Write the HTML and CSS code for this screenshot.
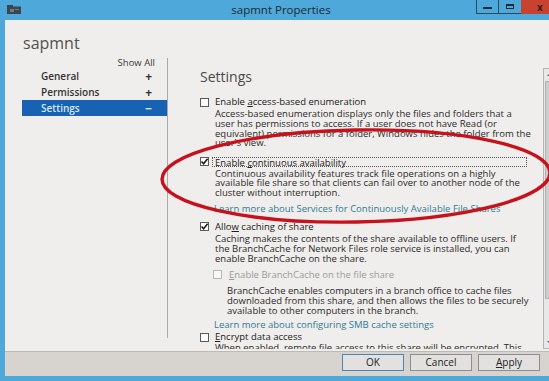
FILE: index.html
```html
<!DOCTYPE html>
<html>
<head>
<meta charset="utf-8">
<title>sapmnt Properties</title>
<link rel="stylesheet" href="styles.css">
</head>
<body>
<div class="window">
  <div class="titlebar">
    <div class="tb-left">
      <svg class="appicon" width="14" height="9" viewBox="0 0 14 9">
        <rect x="0" y="0" width="6" height="2" fill="#3a464d"/>
        <rect x="0" y="1.5" width="14" height="7.5" fill="#3a464d"/>
        <rect x="3" y="4" width="4" height="3" fill="#6d7b82"/>
        <rect x="8" y="4" width="4" height="1" fill="#6d7b82"/>
      </svg>
    </div>
    <div class="title">sapmnt Properties</div>
    <div class="controls">
      <div class="ctl ctl-min"><span class="glyph-min"></span></div>
      <div class="ctl ctl-max"><span class="glyph-max"></span></div>
      <div class="ctl ctl-close">x</div>
    </div>
  </div>
  <div class="client">
    <div class="header">sapmnt</div>
    <div class="main">
      <div class="nav">
        <div class="showall">Show All</div>
        <div class="navitem"><span>General</span><span class="sign">+</span></div>
        <div class="navitem"><span>Permissions</span><span class="sign">+</span></div>
        <div class="navitem selected"><span>Settings</span><span class="sign">&minus;</span></div>
      </div>
      <div class="divider"></div>
      <div class="pane">
        <div class="scrollbox">
          <div class="content">
            <div class="section-title">Settings</div>

            <div class="cbrow r1"><span class="cb"></span><span class="label">Enable <u>a</u>ccess-based enumeration</span></div>
            <div class="desc d1">Access-based enumeration displays only the files and folders that a<br>user has permissions to access. If a user does not have Read (or<br>equivalent) permissions for a folder, Windows hides the folder from the<br>user's view.</div>

            <div class="cbrow r2"><span class="cb checked"><svg width="9" height="9" viewBox="0 0 9 9"><path d="M1.5 4.5 L3.6 6.8 L7.6 1.8" fill="none" stroke="#1c1c1c" stroke-width="1.6"/></svg></span><span class="label focus">Enable <u>c</u>ontinuous availability</span></div>
            <div class="desc d2">Continuous availability features track file operations on a highly<br>available file share so that clients can fail over to another node of the<br>cluster without interruption.</div>
            <div class="link l1">Learn more about Services for Continuously Available File Shares</div>

            <div class="cbrow r3"><span class="cb checked"><svg width="9" height="9" viewBox="0 0 9 9"><path d="M1.5 4.5 L3.6 6.8 L7.6 1.8" fill="none" stroke="#1c1c1c" stroke-width="1.6"/></svg></span><span class="label">Allo<u>w</u> caching of share</span></div>
            <div class="desc d3">Caching makes the contents of the share available to offline users. If<br>the BranchCache for Network Files role service is installed, you can<br>enable BranchCache on the share.</div>

            <div class="cbrow r4 disabled"><span class="cb"></span><span class="label"><u>E</u>nable BranchCache on the file share</span></div>
            <div class="desc d4">BranchCache enables computers in a branch office to cache files<br>downloaded from this share, and then allows the files to be securely<br>available to other computers in the branch.</div>
            <div class="link l2">Learn more about configuring SMB cache settings</div>

            <div class="cbrow r5"><span class="cb"></span><span class="label"><u>E</u>ncrypt data access</span></div>
            <div class="desc d5">When enabled, remote file access to this share will be encrypted. This</div>
          </div>
          <div class="scrollbar">
            <div class="sb-arrow"><span class="tri-up"></span></div>
            <div class="sb-thumb"></div>
            <div class="sb-track"></div>
            <div class="sb-arrow"><span class="tri-down"></span></div>
          </div>
        </div>
      </div>
    </div>
    <div class="footer">
      <div class="btn default">OK</div>
      <div class="btn">Cancel</div>
      <div class="btn"><u>A</u>pply</div>
    </div>
  </div>
  <svg class="annotation" width="562" height="381" viewBox="0 0 562 381">
    <ellipse cx="356" cy="176" rx="194" ry="46" transform="rotate(-1 356 176)" fill="none" stroke="#c5121c" stroke-width="3.4"/>
  </svg>
</div>
</body>
</html>
```

FILE: styles.css
```css
html, body {
  margin: 0;
  padding: 0;
}
body {
  width: 549px;
  height: 381px;
  overflow: hidden;
  background: #4da7d8;
  font-family: "Open Sans", "Noto Sans", sans-serif;
}
.window {
  position: relative;
  width: 562px;
  height: 381px;
  box-sizing: border-box;
  padding: 0 5px 5px 5px;
  background: #4ea8d9;
  display: flex;
  flex-direction: column;
}
.titlebar {
  height: 20px;
  margin: 0 -5px;
  display: grid;
  grid-template-columns: 1fr auto 1fr;
  align-items: start;
}
.tb-left {
  padding: 5px 0 0 7px;
}
.appicon {
  display: block;
}
.title {
  font-size: 11.5px;
  line-height: 20px;
  color: #1d2a33;
}
.controls {
  display: flex;
  justify-content: flex-end;
}
.ctl {
  height: 14px;
  box-sizing: border-box;
  display: flex;
  align-items: center;
  justify-content: center;
}
.ctl-min {
  width: 23px;
  border-left: 1px solid #2b4a60;
  border-bottom: 1px solid #2b4a60;
  border-right: 1px solid #2b4a60;
}
.ctl-max {
  width: 22px;
  border-bottom: 1px solid #2b4a60;
}
.ctl-close {
  width: 41px;
  background: #c7432f;
  color: #3a1a14;
  font-size: 10px;
  font-weight: 700;
  line-height: 14px;
  justify-content: flex-start;
  padding-left: 16px;
}
.glyph-min {
  width: 9px;
  height: 2.5px;
  background: #1b2b36;
  margin-top: 3px;
}
.glyph-max {
  width: 8px;
  height: 5px;
  box-sizing: border-box;
  border: 1px solid #1b2b36;
  border-top-width: 2px;
}
.client {
  flex: 1;
  background: #f0eeec;
  display: flex;
  flex-direction: column;
  min-height: 0;
}
.header {
  height: 36px;
  box-sizing: border-box;
  padding: 13px 0 0 18px;
  font-size: 16px;
  line-height: 20px;
  color: #505050;
}
.main {
  flex: 1;
  display: flex;
  min-height: 0;
}
.nav {
  width: 162px;
  box-sizing: border-box;
  padding-left: 17px;
  display: flex;
  flex-direction: column;
}
.showall {
  margin-top: 1px;
  height: 11px;
  line-height: 11px;
  font-size: 9.5px;
  color: #3a3a3a;
  text-align: right;
  padding-right: 12px;
}
.navitem {
  height: 16px;
  display: flex;
  align-items: center;
  justify-content: space-between;
  padding: 0 15px 0 19px;
  font-size: 10px;
  font-weight: 600;
  color: #333;
}
.navitem .sign {
  font-size: 12px;
  font-weight: 700;
}
.navitem.selected {
  background: #1762b3;
  color: #d8e6f3;
}
.divider {
  width: 1px;
  background: #a9a9a9;
  margin: 2px 0 13px 0;
}
.pane {
  flex: 1;
  padding: 12px 0 2px 0;
  display: flex;
  flex-direction: column;
  min-width: 0;
}
.scrollbox {
  flex: 1;
  display: flex;
  min-height: 0;
}
.content {
  flex: 1;
  overflow: hidden;
  padding-left: 32px;
  color: #2a2a2a;
}
.section-title {
  font-size: 14px;
  line-height: 18px;
  color: #4a4a4a;
}
.cbrow {
  height: 12px;
  display: flex;
  align-items: center;
  font-size: 9.5px;
  color: #202020;
  white-space: nowrap;
}
.cb {
  width: 9px;
  height: 9px;
  box-sizing: border-box;
  border: 1px solid #5a5a5a;
  background: #fff;
  flex: none;
  display: flex;
  align-items: center;
  justify-content: center;
}
.cb svg {
  display: block;
  margin: -1px;
}
.label {
  margin-left: 6px;
  line-height: 12px;
}
.label.focus {
  margin-left: 3px;
  flex: 1;
  margin-right: 16px;
  height: 10px;
  line-height: 10px;
  padding-left: 2px;
  border: 1px dotted #555;
  box-sizing: border-box;
}
.desc {
  font-size: 9.5px;
  line-height: 9.8px;
  padding-left: 15px;
  white-space: nowrap;
  color: #2a2a2a;
}
.link {
  font-size: 9.5px;
  line-height: 12px;
  padding-left: 14px;
  color: #2f7b98;
  white-space: nowrap;
}
.r1 { margin-top: 10px; }
.d1 { margin-top: 1px; }
.r2 { margin-top: 7.5px; }
.d2 { margin-top: 1px; }
.l1 { margin-top: 5px; }
.r3 { margin-top: 5.6px; }
.d3 { margin-top: 1.5px; }
.r4 { margin-top: 5.4px; padding-left: 13px; }
.r4 .label { margin-left: 7px; }
.disabled { color: #9a9a9a; }
.disabled .cb { border-color: #b8b8b8; background: #f7f7f7; }
.d4 { margin-top: 5.1px; padding-left: 27px; }
.l2 { margin-top: 4px; }
.r5 { margin-top: 0; }
.d5 { margin-top: 0; }
.scrollbar {
  width: 14px;
  box-sizing: border-box;
  border: 1px solid #b4b4b4;
  background: #e8e8e8;
  display: flex;
  flex-direction: column;
}
.sb-arrow {
  height: 11px;
  display: flex;
  align-items: center;
  justify-content: center;
}
.tri-up {
  width: 0; height: 0;
  border-left: 3px solid transparent;
  border-right: 3px solid transparent;
  border-bottom: 3px solid #606060;
}
.tri-down {
  width: 0; height: 0;
  border-left: 3px solid transparent;
  border-right: 3px solid transparent;
  border-top: 3px solid #606060;
}
.sb-thumb {
  height: 216px;
  margin: 1px 1px;
  background: #cdcdcd;
  border: 1px solid #b0b0b0;
}
.sb-track {
  flex: 1;
}
.footer {
  height: 25px;
  box-sizing: border-box;
  border-top: 1px solid #bdb9b5;
  background: #d7d3cf;
  display: flex;
  justify-content: flex-end;
  align-items: flex-start;
  gap: 6px;
  padding: 2px 17px 0 0;
}
.btn {
  width: 62px;
  height: 17px;
  box-sizing: border-box;
  border: 1px solid #8e8e8e;
  background: #e3e1df;
  font-size: 10px;
  line-height: 15px;
  text-align: center;
  color: #222;
}
.btn.default {
  border-color: #4a86b8;
}
.annotation {
  position: absolute;
  left: 0;
  top: 0;
  pointer-events: none;
}
```
